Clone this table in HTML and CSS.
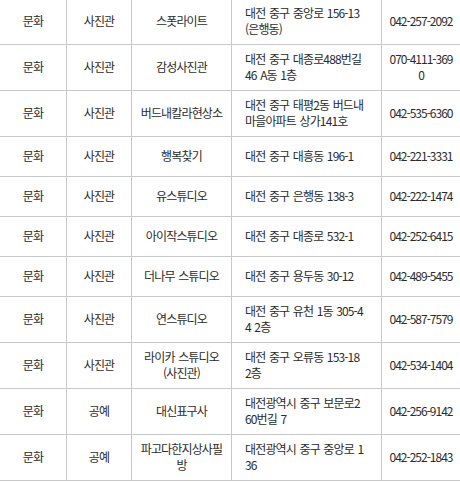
FILE: index.html
```html
<!DOCTYPE html>
<html lang="ko">
<head>
<meta charset="utf-8">
<link rel="stylesheet" href="styles.css">
</head>
<body>
<div class="wrap">
<table class="list">
<colgroup>
<col class="c1"><col class="c2"><col class="c3"><col class="c4"><col class="c5">
</colgroup>
<tbody>
<tr><td>문화</td><td>사진관</td><td>스폿라이트</td><td class="addr">대전 중구 중앙로 156-13 (은행동)</td><td class="tel">042-257-2092</td></tr>
<tr><td>문화</td><td>사진관</td><td>감성사진관</td><td class="addr">대전 중구 대종로488번길 46 A동 1층</td><td class="tel">070-4111-3690</td></tr>
<tr><td>문화</td><td>사진관</td><td>버드내칼라현상소</td><td class="addr">대전 중구 태평2동 버드내 마을아파트 상가141호</td><td class="tel">042-535-6360</td></tr>
<tr><td>문화</td><td>사진관</td><td>행복찾기</td><td class="addr">대전 중구 대흥동 196-1</td><td class="tel">042-221-3331</td></tr>
<tr><td>문화</td><td>사진관</td><td>유스튜디오</td><td class="addr">대전 중구 은행동 138-3</td><td class="tel">042-222-1474</td></tr>
<tr><td>문화</td><td>사진관</td><td>아이작스튜디오</td><td class="addr">대전 중구 대종로 532-1</td><td class="tel">042-252-6415</td></tr>
<tr><td>문화</td><td>사진관</td><td>더나무 스튜디오</td><td class="addr">대전 중구 용두동 30-12</td><td class="tel">042-489-5455</td></tr>
<tr><td>문화</td><td>사진관</td><td>연스튜디오</td><td class="addr">대전 중구 유천 1동 305-44 2층</td><td class="tel">042-587-7579</td></tr>
<tr><td>문화</td><td>사진관</td><td>라이카 스튜디오 (사진관)</td><td class="addr">대전 중구 오류동 153-182층</td><td class="tel">042-534-1404</td></tr>
<tr><td>문화</td><td>공예</td><td>대신표구사</td><td class="addr">대전광역시 중구 보문로260번길 7</td><td class="tel">042-256-9142</td></tr>
<tr><td>문화</td><td>공예</td><td>파고다한지상사필방</td><td class="addr">대전광역시 중구 중앙로 136</td><td class="tel">042-252-1843</td></tr>
</tbody>
</table>
</div>
</body>
</html>
```

FILE: styles.css
```css
html, body {
  margin: 0;
  padding: 0;
  background: #fff;
  overflow: hidden;
}
.wrap {
  margin-top: -2px;
  margin-left: -1px;
}
.list {
  border-collapse: collapse;
  table-layout: fixed;
  width: 463px;
  font-family: "Noto Sans CJK KR", "Noto Sans", sans-serif;
  font-size: 12px;
  letter-spacing: -0.85px;
  word-spacing: 1px;
  line-height: 16px;
  color: #2b2b2b;
}
.c1 { width: 67px; }
.c2 { width: 65px; }
.c3 { width: 100px; }
.c4 { width: 150px; }
.c5 { width: 81px; }
.list td {
  border: 1px solid #c8c8c8;
  height: 40px;
  box-sizing: border-box;
  padding: 6px 6px 7px;
  text-align: center;
  vertical-align: middle;
  word-break: break-all;
}
.list td.addr {
  text-align: left;
  padding-left: 13px;
  padding-right: 17px;
}
.list td.tel {
  letter-spacing: -1px;
  padding-left: 6px;
  padding-right: 8px;
}
```
